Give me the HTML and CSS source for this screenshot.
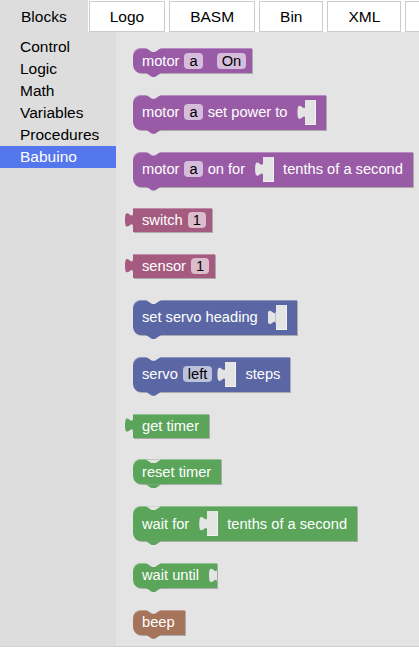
FILE: index.html
```html
<!DOCTYPE html>
<html lang="en">
<head>
<meta charset="UTF-8">
<meta name="viewport" content="width=device-width, initial-scale=1.0">
<title>Babuino Blocks</title>
<link rel="stylesheet" href="styles.css">
</head>
<body>
<div class="tabs">
  <div class="tab active">Blocks</div>
  <div class="tab">Logo</div>
  <div class="tab">BASM</div>
  <div class="tab">Bin</div>
  <div class="tab">XML</div>
  <div class="tab more"></div>
</div>
<div class="workspace">
  <ul class="toolbox">
    <li>Control</li>
    <li>Logic</li>
    <li>Math</li>
    <li>Variables</li>
    <li>Procedures</li>
    <li class="selected">Babuino</li>
  </ul>
  <div class="flyout">
    <!-- motors -->
    <div class="block stmt motor"><span>motor</span><span class="field">a</span><span class="field spaced">On</span></div>
    <div class="block stmt motor"><span>motor</span><span class="field">a</span><span>set power to</span><span class="slot"></span></div>
    <div class="block stmt motor"><span>motor</span><span class="field">a</span><span>on for</span><span class="slot"></span><span>tenths of a second</span></div>
    <!-- inputs -->
    <div class="block out sensor"><span>switch</span><span class="field">1</span></div>
    <div class="block out sensor"><span>sensor</span><span class="field">1</span></div>
    <!-- servo -->
    <div class="block stmt servo"><span>set servo heading</span><span class="slot"></span></div>
    <div class="block stmt servo"><span>servo</span><span class="field">left</span><span class="slot"></span><span>steps</span></div>
    <!-- timer -->
    <div class="block out timer"><span>get timer</span></div>
    <div class="block stmt timer"><span>reset timer</span></div>
    <div class="block stmt timer"><span>wait for</span><span class="slot"></span><span>tenths of a second</span></div>
    <div class="block stmt timer"><span>wait until</span><span class="ext"></span></div>
    <!-- sound -->
    <div class="block stmt sound"><span>beep</span></div>
  </div>
</div>
</body>
</html>
```

FILE: styles.css
```css
body {
  margin: 0;
  background: #fff;
  font-family: "Liberation Sans", Arial, sans-serif;
  color: #000;
  overflow: hidden;
}

/* tab bar */
.tabs {
  display: flex;
  height: 32px;
  overflow: hidden;
}
.tab {
  flex-shrink: 0;
  margin: 1px 0 0 4px;
  padding: 0 20px;
  height: 29px;
  line-height: 29px;
  border: 1px solid #ccc;
  background: #fff;
  font-size: 15.5px;
}
.tab.active {
  margin: 0;
  height: 32px;
  line-height: 33px;
  padding: 0 21px;
  border: none;
  background: #ddd;
}
.tab.active + .tab {
  margin-left: 1px;
}
.tab.more {
  width: 40px;
}

/* workspace */
.workspace {
  display: flex;
  height: 614px;
  border-bottom: 1px solid #d0d0d0;
}
.toolbox {
  width: 116px;
  margin: 0;
  padding: 4px 0 0;
  list-style: none;
  background: #ddd;
  font-size: 15.5px;
}
.toolbox li {
  height: 22px;
  line-height: 22px;
  padding-left: 20px;
}
.toolbox li.selected {
  background: #57e;
  color: #fff;
}
.flyout {
  flex: 1;
  display: flex;
  flex-direction: column;
  align-items: flex-start;
  gap: 21.8px;
  padding: 16px 0 0 17px;
  background: #e4e4e4;
}

/* blocks */
.block {
  position: relative;
  display: flex;
  align-items: center;
  gap: 5px;
  min-height: 25px;
  box-sizing: border-box;
  padding: 0 10px 0 9px;
  color: #fff;
  font-size: 11pt;
  white-space: nowrap;
  box-shadow: inset 0 1px 0 rgba(255, 255, 255, 0.3), 1px 1px 0 rgba(0, 0, 0, 0.25);
}
.motor { background: #995ba6; }
.sensor { background: #a55b80; }
.servo { background: #5b67a5; }
.timer { background: #5ba55b; }
.sound { background: #a5745b; }

.stmt {
  border-radius: 8px 0 0 8px;
}
.stmt::before,
.stmt::after {
  content: "";
  position: absolute;
  left: 13px;
  width: 15px;
  height: 4px;
  clip-path: polygon(0 0, 6px 4px, 9px 4px, 15px 0);
}
.stmt::before {
  top: 0;
  background: #e4e4e4;
}
.stmt::after {
  top: 100%;
  background: inherit;
}
.out {
  min-height: 24px;
}
.out::before {
  content: "";
  position: absolute;
  left: -8px;
  top: 4px;
  width: 8px;
  height: 15px;
  background: inherit;
  clip-path: path("M8 0 C8 10 0 -8 0 7.5 S8 5 8 15 Z");
}

.field {
  height: 16px;
  line-height: 16px;
  padding: 0 5px;
  border-radius: 4px;
  background: rgba(255, 255, 255, 0.6);
  color: #000;
}
.field.spaced {
  margin-left: 9px;
}
.field:last-child {
  margin-right: -4px;
}

/* empty value inputs */
.slot {
  position: relative;
  flex-shrink: 0;
  width: 11px;
  height: 25px;
  margin: 5px 4px 5px 13px;
  background: #e4e4e4;
  box-shadow: inset -1px -1px 0 rgba(255, 255, 255, 0.5);
}
.slot::before,
.ext::before {
  content: "";
  position: absolute;
  top: 5px;
  width: 8px;
  height: 15px;
  background: #e4e4e4;
  clip-path: path("M8 0 C8 10 0 -8 0 7.5 S8 5 8 15 Z");
}
.slot::before {
  left: -8px;
}
.field + .slot {
  margin-left: 8px;
}
.slot:last-child {
  margin-right: 0;
}
.ext {
  position: relative;
  align-self: stretch;
  width: 8px;
  margin: 0 -10px 0 5px;
}
.ext::before {
  right: 0;
}
```
